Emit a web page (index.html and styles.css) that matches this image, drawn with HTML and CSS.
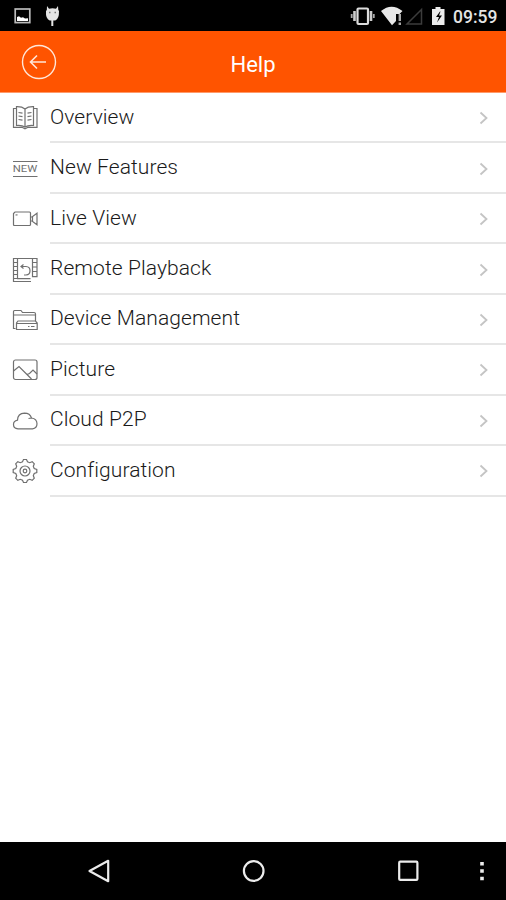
FILE: index.html
```html
<!DOCTYPE html>
<html lang="en">
<head>
<meta charset="utf-8">
<title>Help</title>
<link rel="stylesheet" href="styles.css">
</head>
<body>
<div class="screen">
  <div class="status">
    <svg class="notif" width="60" height="30" viewBox="0 0 60 30">
      <rect x="15.2" y="9" width="14.6" height="13.6" fill="none" stroke="#bbb" stroke-width="1.7"/>
      <path d="M17 21v-4l2-.8 2 1.600 2-.5 2 1.200 3-.2V21z" fill="#fff"/>
      <path d="M47 6l2 2.800q3.500-1.200 7 0L58 6l.3 4 .7 1q.2 8-3.700 9.500h-5.600Q45.500 19 46 11l.8-1z" fill="#e4e4e4"/>
      <path d="M52.300 20v6" stroke="#e4e4e4" stroke-width="2"/>
      <path d="M49 12.500h1.500M54.500 12.500H56" stroke="#777" stroke-width="1.500"/>
    </svg>
    <svg class="signals" width="98" height="30" viewBox="350 0 98 30">
      <rect x="357.500" y="8.500" width="10.500" height="15.500" rx="1" fill="none" stroke="#ddd" stroke-width="2.200"/>
      <path d="M354.500 11v10M371 11v10" stroke="#ccc" stroke-width="2.600"/>
      <path d="M351.700 14v4M373.800 14v4" stroke="#aaa" stroke-width="1.800"/>
      <path d="M381 11q10.500-8.500 21.500 0l-3 3h-3.500v7l-4 4.200z" fill="#e8e8e8"/>
      <path d="M399.800 14v7M399.800 22.500v2.500" stroke="#aaa" stroke-width="2.400"/>
      <path d="M421.500 9.500v14.500h-14.500z" fill="none" stroke="#3c3c3c" stroke-width="1.500"/>
      <path d="M432 9h3.500V7h5v2h4v16H432z" fill="#ececec"/>
      <path d="M440 11.500l-4 5.500h3l-2 5.500 5-7h-3l1.500-4z" fill="#000"/>
    </svg>
    <span class="clock">09:59</span>
  </div>
  <header class="bar">
    <svg class="back" width="36" height="36" viewBox="0 0 36 36" fill="none" stroke="#ffe6d8">
      <circle cx="18" cy="18" r="16.500" stroke-width="1.400"/>
      <path d="M25 18H9.500M16 11.500L9.500 18l6.500 6.500" stroke-width="1.600"/>
    </svg>
    <h1 class="title">Help</h1>
  </header>
  <ul class="list">
    <li class="row">
      <svg class="icon" viewBox="0 0 26 26"><path d="M4.500 1.700Q10 1.500 13 4q3-2.500 8.500-2.300v18.800Q16 20 13 22q-3-2-8.500-1.500zM4.500 3.500h-3v18.800h8.500l3 1.500 3-1.500h9V3.500h-3.500M13 4v18M6.500 7.500l4 .7M6.500 11l4 .7M6.500 14.500l4 .7M19.500 7.500l-4 .7M19.500 11l-4 .7M19.500 14.500l-4 .7"/></svg>
      <span class="label">Overview</span><svg class="chev" viewBox="0 0 10 14"><path d="M1.500 1.500L7.500 7l-6 5.500"/></svg>
    </li>
    <li class="row">
      <svg class="icon" viewBox="0 0 26 26"><path d="M1 5.500h24.500M1 20.500h24.500"/><text x="0.800" y="16.300" textLength="24.500" lengthAdjust="spacingAndGlyphs">NEW</text></svg>
      <span class="label">New Features</span><svg class="chev" viewBox="0 0 10 14"><path d="M1.500 1.500L7.500 7l-6 5.500"/></svg>
    </li>
    <li class="row">
      <svg class="icon" viewBox="0 0 26 26"><path d="M3 6h14.500q1 0 1 1v11.500q0 1-1 1H2.500q-1 0-1-1V7.500zM3.500 9l2-.1M18.500 11h1.500l5-3.800v11.600l-5-3.800h-1.500M20.500 11v4"/></svg>
      <span class="label">Live View</span><svg class="chev" viewBox="0 0 10 14"><path d="M1.500 1.500L7.500 7l-6 5.500"/></svg>
    </li>
    <li class="row">
      <svg class="icon" viewBox="0 0 26 26"><path d="M19 24.500H1.500v-23H25v18.200h-4.500v-18M5.500 1.500v20.200h13M1.500 5.500h4M1.500 9.500h4M1.500 13.500h4M1.500 17.500h4M1.500 21.500h4M20.500 5.500H25M20.500 10H25M20.500 14.500H25M9.500 9.500h4.500q4 .2 4 4.200t-4 4.300h-2M11.500 7.500l-2.500 2 2.500 2"/></svg>
      <span class="label">Remote Playback</span><svg class="chev" viewBox="0 0 10 14"><path d="M1.500 1.500L7.500 7l-6 5.500"/></svg>
    </li>
    <li class="row">
      <svg class="icon" viewBox="0 0 26 26"><path d="M3.500 21.500h-2V4.500q0-1 1-1H9l1.500 2H22q1.500 0 1.500 1.500v7M1.500 8h22M6 14h17.500l1.700 2v6.500H4.500V16zM4.500 16.500h20.700M16 19.500h1.500M19 19.500h3.500"/></svg>
      <span class="label">Device Management</span><svg class="chev" viewBox="0 0 10 14"><path d="M1.500 1.500L7.500 7l-6 5.500"/></svg>
    </li>
    <li class="row">
      <svg class="icon" viewBox="0 0 26 26"><rect x="1.500" y="3" width="23.500" height="19.500" rx="2"/><path d="M1.500 14L7 9.500l12.500 12.500M15 17.500l2.500-1 3.500-3.500 4 4"/></svg>
      <span class="label">Picture</span><svg class="chev" viewBox="0 0 10 14"><path d="M1.500 1.500L7.500 7l-6 5.500"/></svg>
    </li>
    <li class="row">
      <svg class="icon" viewBox="0 0 26 26"><path d="M6 20.800q-4.500-.3-4.500-4.300 0-3.500 4-4.300.2-6.700 7-7 5.500 0 7 4.800 5.500.8 5.500 5.800 0 4.500-4.500 5zM16.500 10.500l3-.5"/></svg>
      <span class="label">Cloud P2P</span><svg class="chev" viewBox="0 0 10 14"><path d="M1.500 1.500L7.500 7l-6 5.500"/></svg>
    </li>
    <li class="row">
      <svg class="icon" viewBox="0 0 26 26"><path d="M10.500 3.800L11.500 1.500h3l1 2.300 2.200.9 2.500-1 2.100 2.100-1 2.500.9 2.200 2.600 1v3l-2.600 1-.9 2.200 1 2.500-2.100 2.100-2.500-1-2.200.9-1 2.300h-3l-1-2.300-2.200-.9-2.500 1-2.100-2.100 1-2.500-.9-2.200-2.600-1v-3l2.600-1 .9-2.200-1-2.500 2.100-2.100 2.500 1z"/><circle cx="13" cy="13" r="5"/><circle cx="13" cy="13" r="1.800"/></svg>
      <span class="label">Configuration</span><svg class="chev" viewBox="0 0 10 14"><path d="M1.500 1.500L7.500 7l-6 5.500"/></svg>
    </li>
  </ul>
  <nav class="nav">
    <svg width="506" height="58" viewBox="0 842 506 58" fill="none" stroke="#ececec" stroke-width="2.200">
      <path d="M108.200 860.800v20.400L89.500 871z" stroke-linejoin="round"/>
      <circle cx="253.700" cy="871" r="9.800"/>
      <rect x="399.200" y="861.700" width="18.200" height="18.200" rx="1"/>
      <path d="M480.200 863.700h3.600M480.200 871h3.600M480.200 878.500h3.600" stroke-width="3.600"/>
    </svg>
  </nav>
</div>
</body>
</html>
```
FILE: styles.css
```css
* { box-sizing: border-box; }
body { margin: 0; background: #fff; font-family: Roboto, "Liberation Sans", sans-serif; }
.screen { width: 506px; height: 900px; display: flex; flex-direction: column; overflow: hidden; }
.status { height: 31px; flex: none; background: #000; display: flex; align-items: flex-start; }
.signals { margin-left: auto; }
.clock { width: 58px; padding-left: 5px; font-size: 17.5px; font-weight: 500; line-height: 34px; color: #e4e4e4; }
.bar { height: 62px; flex: none; background: #ff5400; border-bottom: 1px solid #ff9a6a; display: grid; grid-template-columns: 58px 1fr 58px; align-items: center; }
.back { margin-left: 21px; }
.title { margin: 5px 0 0; text-align: center; font-size: 22px; font-weight: 400; color: #fff; }
.list { list-style: none; margin: 0; padding: 0; flex: 1; }
.row { height: 50.45px; display: grid; grid-template-columns: 38px 1fr 10px; align-items: center; padding: 0 17px 0 12px; background: linear-gradient(#e6e6e6, #e6e6e6) 50px 100% / 100% 2px no-repeat; }
.icon { width: 26px; height: 26px; fill: none; stroke: #707070; stroke-width: 1.2; }
.icon text { fill: #707070; stroke: none; font-size: 9.5px; }
.label { padding-bottom: 3px; font-size: 21px; font-weight: 350; line-height: 24px; letter-spacing: 0.08px; color: #1a1a1a; }
.chev { width: 10px; height: 14px; fill: none; stroke: #c4c4c4; stroke-width: 1.8; }
.nav { height: 58px; flex: none; background: #000; }
```
